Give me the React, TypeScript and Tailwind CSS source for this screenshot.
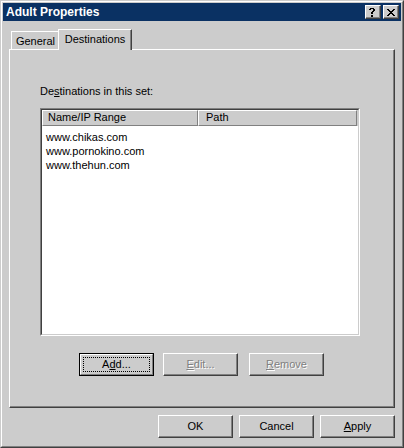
import React from "react";

const face = "font-['Liberation_Sans',Arial,sans-serif] text-[11px]";

type BtnProps = {
  children: React.ReactNode;
  disabled?: boolean;
  isDefault?: boolean;
  className?: string;
};

const Btn: React.FC<BtnProps> = ({ children, disabled, isDefault, className = "" }) => {
  const text = disabled
    ? "text-[#808080] [text-shadow:1px_1px_0_#ffffff]"
    : "text-black";
  if (isDefault) {
    return (
      <div className={`w-[75px] h-[23px] border border-black ${className}`}>
        <div className="w-full h-full border border-t-white border-l-white border-r-[#808080] border-b-[#808080] p-[2px]">
          <div className={`w-full h-full border border-dotted border-black flex items-center justify-center leading-[13px] ${text}`}>
            {children}
          </div>
        </div>
      </div>
    );
  }
  return (
    <div
      className={`w-[75px] h-[23px] border border-t-white border-l-white border-r-[#404040] border-b-[#404040] shadow-[inset_-1px_-1px_0_#808080] flex items-center justify-center leading-[13px] ${text} ${className}`}
    >
      {children}
    </div>
  );
};

const Key: React.FC<{ children: React.ReactNode }> = ({ children }) => (
  <span className="underline decoration-1 underline-offset-[1px]">{children}</span>
);

const CaptionButton: React.FC<{ children: React.ReactNode }> = ({ children }) => (
  <div className="w-[16px] h-[14px] bg-[#cccccc] border border-t-white border-l-white border-r-[#404040] border-b-[#404040] shadow-[inset_-1px_-1px_0_#808080] flex items-center justify-center">
    {children}
  </div>
);

const HelpGlyph = () => (
  <svg width="7" height="9" viewBox="0 0 7 9" shapeRendering="crispEdges" className="ml-[-1px]">
    <rect x="1" y="0" width="4" height="1" fill="#000" />
    <rect x="0" y="1" width="2" height="1" fill="#000" />
    <rect x="4" y="1" width="2" height="2" fill="#000" />
    <rect x="3" y="3" width="2" height="1" fill="#000" />
    <rect x="2" y="4" width="2" height="2" fill="#000" />
    <rect x="2" y="7" width="2" height="2" fill="#000" />
  </svg>
);

const CloseGlyph = () => (
  <svg width="8" height="7" viewBox="0 0 8 7" shapeRendering="crispEdges" className="ml-[-1px]">
    <rect x="0" y="0" width="2" height="1" fill="#000" />
    <rect x="6" y="0" width="2" height="1" fill="#000" />
    <rect x="1" y="1" width="2" height="1" fill="#000" />
    <rect x="5" y="1" width="2" height="1" fill="#000" />
    <rect x="2" y="2" width="4" height="1" fill="#000" />
    <rect x="3" y="3" width="2" height="1" fill="#000" />
    <rect x="2" y="4" width="4" height="1" fill="#000" />
    <rect x="1" y="5" width="2" height="1" fill="#000" />
    <rect x="5" y="5" width="2" height="1" fill="#000" />
    <rect x="0" y="6" width="2" height="1" fill="#000" />
    <rect x="6" y="6" width="2" height="1" fill="#000" />
  </svg>
);

const destinations = ["www.chikas.com", "www.pornokino.com", "www.thehun.com"];

export default function App() {
  return (
    <div className={`w-[404px] h-[448px] bg-[#cccccc] border border-t-[#cccccc] border-l-[#cccccc] border-r-[#404040] border-b-[#404040] ${face}`}>
      <div className="w-full h-full border border-t-white border-l-white border-r-[#808080] border-b-[#808080] p-px flex flex-col">
        {/* caption */}
        <div className="h-[18px] bg-[#0a3163] flex items-center pl-[3px] pr-[2px]">
          <span className="flex-1 text-white font-bold text-[12px] leading-[14px]">Adult Properties</span>
          <div className="flex gap-[2px]">
            <CaptionButton>
              <HelpGlyph />
            </CaptionButton>
            <CaptionButton>
              <CloseGlyph />
            </CaptionButton>
          </div>
        </div>

        {/* body */}
        <div className="flex-1 px-[6px] pt-[8px] flex flex-col">
          <div className="h-[20px] flex items-end pl-[2px]">
            <div className="w-[49px] h-[18px] border-t border-l border-t-white border-l-white border-r border-r-[#404040] shadow-[inset_-1px_0_0_#808080] flex justify-center pt-[3px] leading-[13px]">
              General
            </div>
            <div className="relative z-10 ml-[-2px] -mb-px w-[74px] h-[21px] bg-[#cccccc] border-t border-l border-t-white border-l-white border-r border-r-[#404040] shadow-[inset_-1px_0_0_#808080] flex justify-center pt-[3px] leading-[13px]">
              Destinations
            </div>
          </div>

          <div className="w-[386px] h-[359px] border border-t-white border-l-white border-r-[#404040] border-b-[#404040] shadow-[inset_-1px_-1px_0_#808080] pl-[30px] pt-[35px]">
            <div className="leading-[13px]">
              De<Key>s</Key>tinations in this set:
            </div>

            <div className="mt-[10px] w-[320px] h-[228px] border border-t-[#808080] border-l-[#808080] border-r-white border-b-white">
              <div className="w-full h-full bg-white border border-t-[#404040] border-l-[#404040] border-r-[#cccccc] border-b-[#cccccc] flex flex-col">
                <div className="h-[16px] bg-[#cccccc] flex">
                  <div className="w-[156px] border border-t-white border-l-white border-r-[#808080] border-b-[#808080] pl-[5px] leading-[13px]">
                    Name/IP Range
                  </div>
                  <div className="w-[159px] border border-t-white border-l-white border-r-[#808080] border-b-[#808080] pl-[7px] leading-[13px]">
                    Path
                  </div>
                </div>
                <div className="pt-[4px] pl-[4px] leading-[14px]">
                  {destinations.map((d) => (
                    <div key={d}>{d}</div>
                  ))}
                </div>
              </div>
            </div>

            <div className="mt-[17px] flex">
              <Btn isDefault className="ml-[39px]">
                <span>
                  A<Key>d</Key>d...
                </span>
              </Btn>
              <Btn disabled className="ml-[9px]">
                <span>
                  <Key>E</Key>dit...
                </span>
              </Btn>
              <Btn disabled className="ml-[11px]">
                <span>
                  <Key>R</Key>emove
                </span>
              </Btn>
            </div>
          </div>

          <div className="mt-[7px] flex justify-end gap-[6px]">
            <Btn>OK</Btn>
            <Btn>Cancel</Btn>
            <Btn>
              <span>
                <Key>A</Key>pply
              </span>
            </Btn>
          </div>
        </div>
      </div>
    </div>
  );
}
